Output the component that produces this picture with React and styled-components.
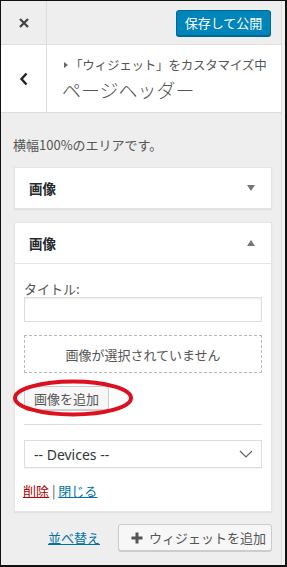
import React from "react";
import styled, { createGlobalStyle } from "styled-components";

const Global = createGlobalStyle`
  html, body { margin: 0; padding: 0; background: #fff; }
  * { box-sizing: border-box; }
  body { font-family: "Noto Sans CJK JP", "Noto Sans", sans-serif; }
`;

const Frame = styled.div`
  width: 287px;
  height: 567px;
  border: 1px solid #111;
  border-right-width: 2px;
  border-bottom-width: 2px;
  background: #f1f1f1;
  display: flex;
  overflow: hidden;
`;

const Panel = styled.div`
  width: 281px;
  height: 100%;
  background: #eee;
  border-right: 1px solid #ddd;
  display: flex;
  flex-direction: column;
  color: #555;
  font-size: 13px;
`;

const Header = styled.div`
  height: 44px;
  flex: none;
  display: flex;
  align-items: center;
  border-bottom: 1px solid #ddd;
  background: #eee;
`;

const SideCell = styled.div`
  width: 46px;
  align-self: stretch;
  flex: none;
  display: flex;
  align-items: center;
  justify-content: center;
  border-right: 1px solid #ddd;
  color: #444;
`;

const SaveButton = styled.button`
  margin-left: auto;
  margin-right: 10px;
  width: 95px;
  height: 26px;
  border: 1px solid #006799;
  border-radius: 3px;
  background: #0085ba;
  color: #fff;
  font-family: inherit;
  font-size: 13px;
  line-height: 1;
  padding: 0;
  box-shadow: 0 1px 0 #006799;
`;

const TitleSection = styled.div`
  height: 68px;
  flex: none;
  display: flex;
  background: #fff;
  border-bottom: 1px solid #ddd;
`;

const TitleText = styled.div`
  padding: 11px 0 0 15px;
  display: flex;
  flex-direction: column;
`;

const Crumb = styled.span`
  font-size: 12.5px;
  line-height: 18px;
  color: #555;
  display: flex;
  align-items: center;
  letter-spacing: -0.2px;
`;

const Caret = styled.span`
  display: inline-block;
  width: 0;
  height: 0;
  border-top: 3px solid transparent;
  border-bottom: 3px solid transparent;
  border-left: 4px solid #666;
  margin: 0 2px 0 2px;
`;

const Title = styled.span`
  font-size: 19px;
  line-height: 26px;
  font-weight: 300;
  color: #555;
  margin-top: 3px;
`;

const Description = styled.p`
  margin: 22px 0 12px 12px;
  font-size: 13px;
  line-height: 20px;
  color: #555;
`;

const Widget = styled.div`
  margin: 0 9px 13px 13px;
  background: #fff;
  border: 1px solid #e5e5e5;
  box-shadow: 0 1px 1px rgba(0, 0, 0, 0.05);
`;

const WidgetHead = styled.div`
  height: ${(p) => (p.$open ? "41px" : "40px")};
  display: flex;
  align-items: center;
  padding: 0 14px;
  border-bottom: ${(p) => (p.$open ? "1px solid #e5e5e5" : "none")};
  font-size: 13.5px;
  font-weight: 700;
  color: #23282d;
`;

const Arrow = styled.span`
  margin-left: auto;
  width: 0;
  height: 0;
  border-left: 4px solid transparent;
  border-right: 4px solid transparent;
  ${(p) =>
    p.$up
      ? "border-bottom: 6px solid #777;"
      : "border-top: 6px solid #777;"}
  margin-right: 2px;
`;

const WidgetBody = styled.div`
  padding: 16px 9px 11px 9px;
  display: flex;
  flex-direction: column;
  position: relative;
`;

const Label = styled.label`
  font-size: 13px;
  line-height: 17px;
  color: #555;
`;

const TextInput = styled.input`
  height: 25px;
  width: 100%;
  border: 1px solid #ddd;
  box-shadow: inset 0 1px 2px rgba(0, 0, 0, 0.07);
  background: #fff;
  margin: 0;
`;

const Placeholder = styled.div`
  margin-top: 13px;
  height: 38px;
  border: 1px dashed #b4b9be;
  display: flex;
  align-items: center;
  justify-content: center;
  font-size: 13px;
  color: #555;
`;

const ButtonRow = styled.div`
  margin-top: 13px;
  position: relative;
  display: flex;
`;

const SmallButton = styled.button`
  height: 24px;
  padding: 0 9px;
  border: 1px solid #ccc;
  border-radius: 3px;
  background: #f7f7f7;
  box-shadow: 0 1px 0 #ccc;
  color: #555;
  font-family: inherit;
  font-size: 13px;
  line-height: 1;
`;

const Ellipse = styled.svg`
  position: absolute;
  left: -12px;
  top: -7px;
  pointer-events: none;
`;

const Rule = styled.hr`
  margin: 14px 0 0 0;
  border: none;
  border-top: 1px solid #ddd;
`;

const Select = styled.div`
  margin-top: 15px;
  height: 28px;
  border: 1px solid #ddd;
  box-shadow: 0 1px 1px rgba(0, 0, 0, 0.04);
  display: flex;
  align-items: center;
  padding: 0 8px 0 9px;
  font-family: "Noto Sans", sans-serif;
  font-size: 14px;
  color: #32373c;
  justify-content: space-between;
`;

const Links = styled.div`
  margin-top: 14px;
  font-size: 13px;
  line-height: 18px;
  color: #555;
  margin-left: -1px;
`;

const Link = styled.a`
  color: ${(p) => (p.$danger ? "#a00" : "#0073aa")};
  text-decoration: underline;
`;

const Footer = styled.div`
  display: flex;
  align-items: center;
  justify-content: flex-end;
  gap: 18px;
  margin: -1px 9px 0 0;
`;

const AddButton = styled.button`
  width: 154px;
  height: 27px;
  display: flex;
  align-items: center;
  gap: 6px;
  padding: 0 0 0 12px;
  border: 1px solid #ccc;
  border-radius: 3px;
  background: #f7f7f7;
  box-shadow: 0 1px 0 #ccc;
  color: #555;
  font-family: inherit;
  font-size: 13px;
`;

export default function App() {
  return (
    <>
      <Global />
      <Frame>
        <Panel>
          <Header>
            <SideCell>
              <svg width="12" height="12" viewBox="0 0 12 12">
                <path d="M2 2 L10 10 M10 2 L2 10" stroke="#444" strokeWidth="2.2" />
              </svg>
            </SideCell>
            <SaveButton>保存して公開</SaveButton>
          </Header>
          <TitleSection>
            <SideCell>
              <svg width="10" height="14" viewBox="0 0 10 14">
                <path d="M7.5 1.5 L2.5 7 L7.5 12.5" stroke="#222" strokeWidth="2.4" fill="none" />
              </svg>
            </SideCell>
            <TitleText>
              <Crumb>
                <Caret />「ウィジェット」をカスタマイズ中
              </Crumb>
              <Title>ページヘッダー</Title>
            </TitleText>
          </TitleSection>
          <Description>横幅100%のエリアです。</Description>
          <Widget>
            <WidgetHead>
              画像
              <Arrow />
            </WidgetHead>
          </Widget>
          <Widget>
            <WidgetHead $open>
              画像
              <Arrow $up />
            </WidgetHead>
            <WidgetBody>
              <Label>タイトル:</Label>
              <TextInput type="text" />
              <Placeholder>画像が選択されていません</Placeholder>
              <ButtonRow>
                <SmallButton>画像を追加</SmallButton>
                <Ellipse width="122" height="38" viewBox="0 0 122 38">
                  <ellipse cx="61" cy="19" rx="58" ry="16.5" fill="none" stroke="#dd1020" strokeWidth="4" />
                </Ellipse>
              </ButtonRow>
              <Rule />
              <Select>
                <span>-- Devices --</span>
                <svg width="14" height="8" viewBox="0 0 14 8">
                  <path d="M1 1 L7 7 L13 1" stroke="#666" strokeWidth="1.2" fill="none" />
                </svg>
              </Select>
              <Links>
                <Link $danger>削除</Link> | <Link>閉じる</Link>
              </Links>
            </WidgetBody>
          </Widget>
          <Footer>
            <Link>並べ替え</Link>
            <AddButton>
              <svg width="12" height="12" viewBox="0 0 12 12">
                <path d="M6 0.5 V11.5 M0.5 6 H11.5" stroke="#555" strokeWidth="3" />
              </svg>
              ウィジェットを追加
            </AddButton>
          </Footer>
        </Panel>
      </Frame>
    </>
  );
}
